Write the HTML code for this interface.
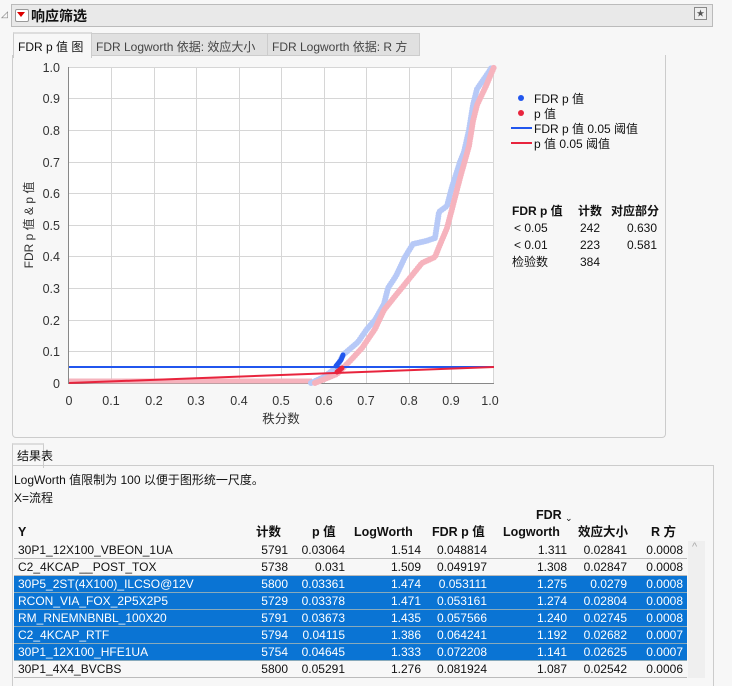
<!DOCTYPE html><html><head><meta charset="utf-8"><style>
body{margin:0;width:732px;height:678px;background:#f7f7f7;font-family:"Liberation Sans","Noto Sans CJK SC",sans-serif;font-size:12px;color:#111;position:relative;overflow:hidden}
.a{position:absolute;white-space:nowrap}
.h{position:absolute;white-space:nowrap;line-height:14px;height:14px;top:525px}
</style></head><body>
<div class="a" style="left:1px;top:9px;font-size:9px;color:#777">◿</div>
<div class="a" style="left:11px;top:4px;width:700px;height:21px;background:#e9e9e9;border:1px solid #bbb"></div>
<div class="a" style="left:15px;top:9px;width:12px;height:11px;background:#fff;border:1px solid #999;border-radius:2px"></div>
<div class="a" style="left:17px;top:12px;width:0;height:0;border-left:4px solid transparent;border-right:4px solid transparent;border-top:5px solid #d00"></div>
<div class="a" style="left:31px;top:6px;font-size:14px;font-weight:bold">响应筛选</div>
<div class="a" style="left:694px;top:7px;width:11px;height:11px;border:1px solid #888;background:#eee;font-size:8px;line-height:11px;text-align:center;color:#555">★</div>
<div class="a" style="left:13px;top:32px;width:77px;height:24px;background:#f7f7f7;border:1px solid #ccc;border-bottom:none;border-top:2px solid #ddd"></div>
<div class="a" style="left:18px;top:38px">FDR p 值 图</div>
<div class="a" style="left:91px;top:33px;width:175px;height:21px;background:#e0e0e0;border:1px solid #ccc"></div>
<div class="a" style="left:96px;top:38px;color:#444">FDR Logworth 依据: 效应大小</div>
<div class="a" style="left:267px;top:33px;width:151px;height:21px;background:#e0e0e0;border:1px solid #ccc"></div>
<div class="a" style="left:272px;top:38px;color:#444">FDR Logworth 依据: R 方</div>
<div class="a" style="left:12px;top:55px;width:652px;height:382px;border:1px solid #ccc;border-top:none;border-radius:0 0 4px 4px"></div>
<svg class="a" style="left:0;top:0" width="732" height="440">
<rect x="69" y="67" width="425" height="316" fill="#fff"/>
<g stroke="#d6d6d6" stroke-width="1">
<line x1="111.5" y1="67" x2="111.5" y2="383"/><line x1="154.5" y1="67" x2="154.5" y2="383"/><line x1="196.5" y1="67" x2="196.5" y2="383"/><line x1="239.5" y1="67" x2="239.5" y2="383"/><line x1="281.5" y1="67" x2="281.5" y2="383"/><line x1="324.5" y1="67" x2="324.5" y2="383"/><line x1="366.5" y1="67" x2="366.5" y2="383"/><line x1="409.5" y1="67" x2="409.5" y2="383"/><line x1="451.5" y1="67" x2="451.5" y2="383"/><line x1="493.5" y1="67" x2="493.5" y2="383"/>
<line x1="69" y1="67.5" x2="494" y2="67.5"/><line x1="69" y1="98.5" x2="494" y2="98.5"/><line x1="69" y1="130.5" x2="494" y2="130.5"/><line x1="69" y1="162.5" x2="494" y2="162.5"/><line x1="69" y1="193.5" x2="494" y2="193.5"/><line x1="69" y1="225.5" x2="494" y2="225.5"/><line x1="69" y1="256.5" x2="494" y2="256.5"/><line x1="69" y1="288.5" x2="494" y2="288.5"/><line x1="69" y1="320.5" x2="494" y2="320.5"/><line x1="69" y1="351.5" x2="494" y2="351.5"/>
</g>
<line x1="68.5" y1="67" x2="68.5" y2="384" stroke="#888"/>
<line x1="68" y1="383.5" x2="494" y2="383.5" stroke="#888"/>
<g fill="#333" font-size="12.5" text-anchor="end">
<text x="60" y="72">1.0</text><text x="60" y="103">0.9</text><text x="60" y="135">0.8</text><text x="60" y="167">0.7</text><text x="60" y="198">0.6</text><text x="60" y="230">0.5</text><text x="60" y="261">0.4</text><text x="60" y="293">0.3</text><text x="60" y="325">0.2</text><text x="60" y="356">0.1</text><text x="60" y="388">0</text></g>
<g fill="#333" font-size="12.5" text-anchor="middle">
<text x="69" y="405">0</text><text x="111" y="405">0.1</text><text x="154" y="405">0.2</text><text x="196" y="405">0.3</text><text x="239" y="405">0.4</text><text x="281" y="405">0.5</text><text x="324" y="405">0.6</text><text x="366" y="405">0.7</text><text x="409" y="405">0.8</text><text x="451" y="405">0.9</text><text x="490" y="405">1.0</text>
<text x="281" y="423">秩分数</text></g>
<text x="33" y="225" font-size="12" fill="#333" text-anchor="middle" transform="rotate(-90 33 225)">FDR p 值 &amp; p 值</text>
<line x1="69" y1="381" x2="312" y2="381" stroke="#f6b3bd" stroke-width="5"/>
<polyline fill="none" stroke="#b7c9f7" stroke-width="6" stroke-linecap="round" stroke-dasharray="0 2.5" points="311,383 324,377 337,367 343,355 358,342 367,329 375,320 384,304 388,288 396,276 405,257 413,244 426,241 435,238 439,212 447,206 452,187 460,162 464,152 469,130 473,105 477,89 486,76 492,67"/>
<polyline fill="none" stroke="#f6b3bd" stroke-width="6" stroke-linecap="round" stroke-dasharray="0 2.5" points="315,383 337,374 350,361 362,348 375,329 384,310 396,295 409,279 422,263 435,257 439,247 447,228 452,209 460,178 469,146 473,121 477,105 486,86 494,67"/>
<line x1="69" y1="367" x2="494" y2="367" stroke="#2156ee" stroke-width="2"/>
<line x1="69" y1="383" x2="494" y2="367" stroke="#e8243d" stroke-width="2"/>
<path d="M336 366 L341 360 L343 355" stroke="#2156ee" stroke-width="5" fill="none" stroke-linecap="round"/>
<path d="M337 372 L342 368" stroke="#e8243d" stroke-width="5" fill="none" stroke-linecap="round"/>
<circle cx="521" cy="98" r="3" fill="#2156ee"/><circle cx="521" cy="113" r="3" fill="#e8243d"/>
<line x1="511" y1="128" x2="532" y2="128" stroke="#2156ee" stroke-width="2"/>
<line x1="511" y1="143" x2="532" y2="143" stroke="#e8243d" stroke-width="2"/>
<g font-size="12" fill="#111"><text x="534" y="103">FDR p 值</text><text x="534" y="118">p 值</text><text x="534" y="133">FDR p 值 0.05 阈值</text><text x="534" y="148">p 值 0.05 阈值</text>
<text x="512" y="215" font-weight="bold">FDR p 值</text><text x="578" y="215" font-weight="bold">计数</text><text x="611" y="215" font-weight="bold">对应部分</text>
<text x="514" y="232">&lt; 0.05</text><text x="580" y="232">242</text><text x="657" y="232" text-anchor="end">0.630</text>
<text x="514" y="249">&lt; 0.01</text><text x="580" y="249">223</text><text x="657" y="249" text-anchor="end">0.581</text>
<text x="512" y="266">检验数</text><text x="580" y="266">384</text></g>
</svg>
<div class="a" style="left:12px;top:443px;width:30px;height:23px;background:#f7f7f7;border:1px solid #ccc;border-bottom:none;border-top:2px solid #ddd"></div>
<div class="a" style="left:17px;top:447px">结果表</div>
<div class="a" style="left:12px;top:465px;width:700px;height:220px;border:1px solid #ccc;border-bottom:none"></div>
<div class="a" style="left:14px;top:471px">LogWorth 值限制为 100 以便于图形统一尺度。</div>
<div class="a" style="left:14px;top:489px">X=流程</div>
<div class="a" style="left:688px;top:541px;width:17px;height:137px;background:#efefef"></div>
<div class="a" style="left:692px;top:541px;color:#aaa;font-size:11px">^</div>
<div style="font-size:12.5px;font-weight:bold">
<div class="h" style="left:18px">Y</div>
<div class="h" style="left:256px">计数</div>
<div class="h" style="left:312px">p 值</div>
<div class="h" style="left:354px">LogWorth</div>
<div class="h" style="left:432px">FDR p 值</div>
<div class="h" style="left:536px;top:508px">FDR</div>
<div class="a" style="left:565px;top:513px;font-size:9px;font-weight:normal">⌄</div>
<div class="h" style="left:503px">Logworth</div>
<div class="h" style="left:578px">效应大小</div>
<div class="h" style="left:651px">R 方</div>
</div>
<div class="a" style="left:14px;top:542px;width:673px">
<style>.row{position:relative;height:16px;border-bottom:1px solid #bbb;font-size:12px;line-height:16px}.row span{position:absolute}.s{background:#0a74d4;color:#fff;border-bottom:1px solid #8ab}</style>
<div class="row"><span style="left:4px">30P1_12X100_VBEON_1UA</span><span style="right:399px">5791</span><span style="right:342px">0.03064</span><span style="right:266px">1.514</span><span style="right:200px">0.048814</span><span style="right:120px">1.311</span><span style="right:60px">0.02841</span><span style="right:4px">0.0008</span></div>
<div class="row"><span style="left:4px">C2_4KCAP__POST_TOX</span><span style="right:399px">5738</span><span style="right:342px">0.031</span><span style="right:266px">1.509</span><span style="right:200px">0.049197</span><span style="right:120px">1.308</span><span style="right:60px">0.02847</span><span style="right:4px">0.0008</span></div>
<div class="row s"><span style="left:4px">30P5_2ST(4X100)_ILCSO@12V</span><span style="right:399px">5800</span><span style="right:342px">0.03361</span><span style="right:266px">1.474</span><span style="right:200px">0.053111</span><span style="right:120px">1.275</span><span style="right:60px">0.0279</span><span style="right:4px">0.0008</span></div>
<div class="row s"><span style="left:4px">RCON_VIA_FOX_2P5X2P5</span><span style="right:399px">5729</span><span style="right:342px">0.03378</span><span style="right:266px">1.471</span><span style="right:200px">0.053161</span><span style="right:120px">1.274</span><span style="right:60px">0.02804</span><span style="right:4px">0.0008</span></div>
<div class="row s"><span style="left:4px">RM_RNEMNBNBL_100X20</span><span style="right:399px">5791</span><span style="right:342px">0.03673</span><span style="right:266px">1.435</span><span style="right:200px">0.057566</span><span style="right:120px">1.240</span><span style="right:60px">0.02745</span><span style="right:4px">0.0008</span></div>
<div class="row s"><span style="left:4px">C2_4KCAP_RTF</span><span style="right:399px">5794</span><span style="right:342px">0.04115</span><span style="right:266px">1.386</span><span style="right:200px">0.064241</span><span style="right:120px">1.192</span><span style="right:60px">0.02682</span><span style="right:4px">0.0007</span></div>
<div class="row s"><span style="left:4px">30P1_12X100_HFE1UA</span><span style="right:399px">5754</span><span style="right:342px">0.04645</span><span style="right:266px">1.333</span><span style="right:200px">0.072208</span><span style="right:120px">1.141</span><span style="right:60px">0.02625</span><span style="right:4px">0.0007</span></div>
<div class="row"><span style="left:4px">30P1_4X4_BVCBS</span><span style="right:399px">5800</span><span style="right:342px">0.05291</span><span style="right:266px">1.276</span><span style="right:200px">0.081924</span><span style="right:120px">1.087</span><span style="right:60px">0.02542</span><span style="right:4px">0.0006</span></div>
</div>
</body></html>
